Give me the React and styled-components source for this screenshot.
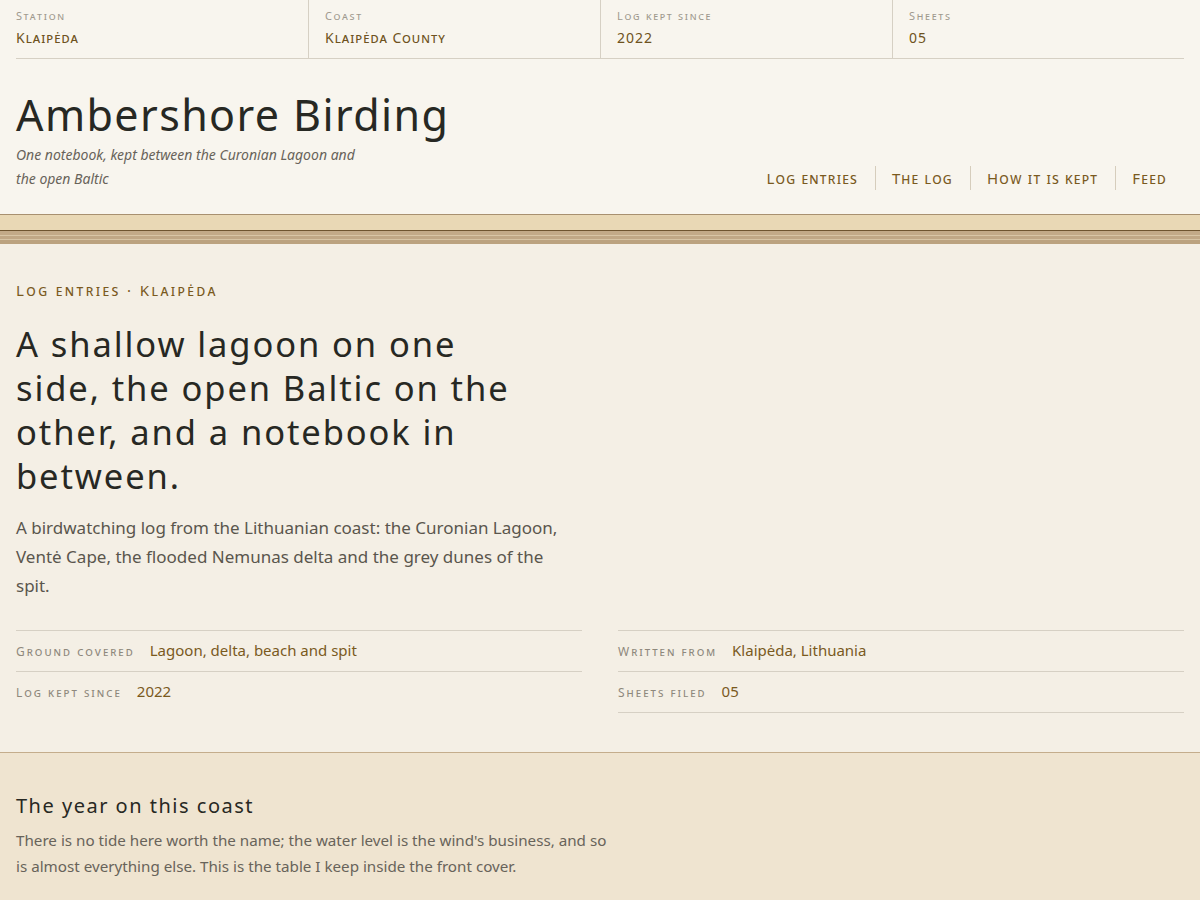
import React from 'react'
import styled, { createGlobalStyle } from 'styled-components'

const GlobalStyle = createGlobalStyle`
  * { box-sizing: border-box; }
  body {
    margin: 0;
    background: #efe4d0;
    font-family: 'Noto Sans', 'Open Sans', sans-serif;
    color: #2a2a24;
  }
`

const facts = [
  { label: 'Station', value: 'Klaipėda' },
  { label: 'Coast', value: 'Klaipėda County' },
  { label: 'Log kept since', value: '2022' },
  { label: 'Sheets', value: '05' },
]

const nav = ['Log entries', 'The log', 'How it is kept', 'Feed']

const details = [
  { label: 'Ground covered', value: 'Lagoon, delta, beach and spit' },
  { label: 'Written from', value: 'Klaipėda, Lithuania' },
  { label: 'Log kept since', value: '2022' },
  { label: 'Sheets filed', value: '05' },
]

export default function App() {
  return (
    <>
      <GlobalStyle />
      <Top>
        <Strip>
          {facts.map((f) => (
            <StripCell key={f.label}>
              <StripLabel>{f.label}</StripLabel>
              <StripValue>{f.value}</StripValue>
            </StripCell>
          ))}
        </Strip>
        <Masthead>
          <Brand>
            <SiteTitle>Ambershore Birding</SiteTitle>
            <Tagline>One notebook, kept between the Curonian Lagoon and the open Baltic</Tagline>
          </Brand>
          <Nav>
            {nav.map((n) => (
              <NavLink key={n} href='#'>{n}</NavLink>
            ))}
          </Nav>
        </Masthead>
      </Top>
      <Rule />
      <Main>
        <Eyebrow>Log entries · Klaipėda</Eyebrow>
        <Headline>A shallow lagoon on one side, the open Baltic on the other, and a notebook in between.</Headline>
        <Lede>
          A birdwatching log from the Lithuanian coast: the Curonian Lagoon, Ventė Cape, the flooded
          Nemunas delta and the grey dunes of the spit.
        </Lede>
        <Details>
          {details.map((d) => (
            <Detail key={d.label}>
              <DetailLabel>{d.label}</DetailLabel>
              <DetailValue>{d.value}</DetailValue>
            </Detail>
          ))}
        </Details>
      </Main>
      <Year>
        <YearTitle>The year on this coast</YearTitle>
        <YearText>
          There is no tide here worth the name; the water level is the wind's business, and so is
          almost everything else. This is the table I keep inside the front cover.
        </YearText>
      </Year>
    </>
  )
}

const Top = styled.header`
  background: #f8f5ee;
  padding: 0 16px;
  border-bottom: 1px solid #a89070;
`

const Strip = styled.div`
  display: grid;
  grid-template-columns: repeat(4, 1fr);
  border-bottom: 1px solid #d6d0c4;
`

const StripCell = styled.div`
  padding: 7px 16px 11px;
  border-left: 1px solid #d6d0c4;

  &:first-child {
    border-left: none;
    padding-left: 0;
  }
`

const StripLabel = styled.div`
  font-size: 11px;
  line-height: 17px;
  font-variant: small-caps;
  letter-spacing: 1.7px;
  color: #a09a8e;
`

const StripValue = styled.div`
  margin-top: 4px;
  font-size: 14px;
  line-height: 19px;
  font-variant: small-caps;
  letter-spacing: 1px;
  color: #6e5220;
`

const Masthead = styled.div`
  display: flex;
  align-items: flex-end;
  justify-content: space-between;
  padding: 28px 0 23px;
`

const Brand = styled.div`
  max-width: 360px;
`

const SiteTitle = styled.h1`
  margin: 0;
  font-size: 43px;
  line-height: 56px;
  font-weight: 400;
  letter-spacing: 1.4px;
  white-space: nowrap;
  color: #272823;
`

const Tagline = styled.p`
  margin: 0;
  font-size: 14px;
  line-height: 24px;
  font-style: italic;
  color: #68635a;
`

const Nav = styled.nav`
  display: flex;
  align-items: center;
  margin-bottom: 1px;
`

const NavLink = styled.a`
  display: block;
  padding: 2px 17px 2px 16px;
  font-size: 15px;
  line-height: 20px;
  font-variant: small-caps;
  letter-spacing: 1.2px;
  color: #7a5a1e;
  text-decoration: none;
  border-left: 1px solid #d6cdbc;

  &:first-child {
    border-left: none;
  }
`

const Rule = styled.div`
  height: 29px;
  background:
    linear-gradient(#e9d8b5 0 15px, #6e5530 15px 16px, #c2aa88 16px 20px, #d8c6a6 20px 21px,
      #c0a886 21px 24px, #d6c4a4 24px 25px, #bba27f 25px 29px);
`

const Main = styled.main`
  background: #f4efe5;
  padding: 36px 16px 39px;
`

const Eyebrow = styled.div`
  font-size: 15px;
  line-height: 20px;
  font-variant: small-caps;
  letter-spacing: 2.4px;
  color: #7a5a1e;
`

const Headline = styled.h2`
  margin: 22px 0 0;
  max-width: 528px;
  font-size: 34.5px;
  line-height: 44px;
  font-weight: 400;
  letter-spacing: 1.9px;
  color: #272823;
`

const Lede = styled.p`
  margin: 15px 0 0;
  max-width: 560px;
  font-size: 17px;
  line-height: 29px;
  color: #5a564d;
`

const Details = styled.dl`
  display: grid;
  grid-template-columns: 1fr 1fr;
  column-gap: 36px;
  margin: 30px 0 0;
`

const Detail = styled.div`
  display: flex;
  align-items: baseline;
  gap: 15px;
  height: 41px;
  padding-top: 9px;
  border-top: 1px solid #d6d0c4;

  &:last-child {
    border-bottom: 1px solid #d6d0c4;
    height: 42px;
  }
`

const DetailLabel = styled.dt`
  font-size: 12px;
  font-variant: small-caps;
  letter-spacing: 2px;
  color: #8e887c;
`

const DetailValue = styled.dd`
  margin: 0;
  font-size: 15px;
  line-height: 20px;
  color: #7a5a1e;
`

const Year = styled.section`
  background: #efe4d0;
  border-top: 1px solid #c4ad8c;
  padding: 38px 16px 30px;
`

const YearTitle = styled.h3`
  margin: 0;
  font-size: 20px;
  line-height: 30px;
  font-weight: 400;
  letter-spacing: 1.5px;
  color: #272823;
`

const YearText = styled.p`
  margin: 6px 0 0;
  max-width: 602px;
  font-size: 15.2px;
  line-height: 26px;
  color: #68635a;
`
